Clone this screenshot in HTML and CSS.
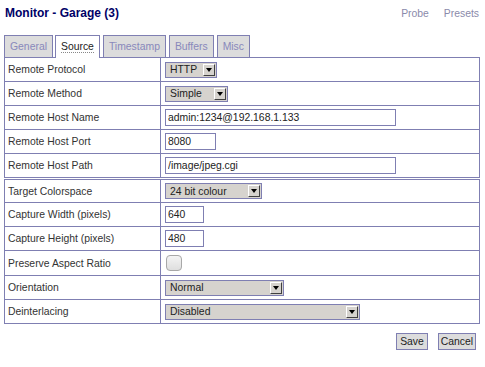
FILE: index.html
```html
<!DOCTYPE html>
<html lang="en">

<head>
    <meta charset="UTF-8" />
    <title>Monitor - Garage (3)</title>
    <link rel="stylesheet" href="styles.css">
</head>

<body>
    <div class="page">
        <div class="header">
            <h2>Monitor - Garage (3)</h2>
            <div class="links">
                <a href="#">Probe</a>
                <a href="#">Presets</a>
            </div>
        </div>

        <ul class="tabs">
            <li><a href="#">General</a></li>
            <li class="active"><a href="#">Source</a></li>
            <li><a href="#">Timestamp</a></li>
            <li><a href="#">Buffers</a></li>
            <li><a href="#">Misc</a></li>
        </ul>

        <table class="settings">
            <tr>
                <td class="label">Remote Protocol</td>
                <td><span class="select" style="width: 52px"><span class="value">HTTP</span><span class="arrow"></span></span></td>
            </tr>
            <tr>
                <td class="label">Remote Method</td>
                <td><span class="select" style="width: 63px"><span class="value">Simple</span><span class="arrow"></span></span></td>
            </tr>
            <tr>
                <td class="label">Remote Host Name</td>
                <td><input type="text" class="text wide" value="admin:1234@192.168.1.133"></td>
            </tr>
            <tr>
                <td class="label">Remote Host Port</td>
                <td><input type="text" class="text port" value="8080"></td>
            </tr>
            <tr>
                <td class="label">Remote Host Path</td>
                <td><input type="text" class="text wide" value="/image/jpeg.cgi"></td>
            </tr>
            <tr class="group">
                <td class="label">Target Colorspace</td>
                <td><span class="select" style="width: 97px"><span class="value">24 bit colour</span><span class="arrow"></span></span></td>
            </tr>
            <tr>
                <td class="label">Capture Width (pixels)</td>
                <td><input type="text" class="text small" value="640"></td>
            </tr>
            <tr>
                <td class="label">Capture Height (pixels)</td>
                <td><input type="text" class="text small" value="480"></td>
            </tr>
            <tr class="check-row">
                <td class="label">Preserve Aspect Ratio</td>
                <td><input type="checkbox" class="check"></td>
            </tr>
            <tr>
                <td class="label">Orientation</td>
                <td><span class="select" style="width: 119px"><span class="value">Normal</span><span class="arrow"></span></span></td>
            </tr>
            <tr>
                <td class="label">Deinterlacing</td>
                <td><span class="select" style="width: 195px"><span class="value">Disabled</span><span class="arrow"></span></span></td>
            </tr>
        </table>

        <div class="actions">
            <button class="save">Save</button>
            <button class="cancel">Cancel</button>
        </div>
    </div>
</body>

</html>
```

FILE: styles.css
```css
* {
    box-sizing: border-box;
    --line: #7f7fb2;
    --tab-bg: #dcdcdc;
    --control-bg: #d6d3ce;
}

body {
    margin: 0;
    font-family: "Liberation Sans", Arial, sans-serif;
    font-size: 10.4px;
    color: #333333;
    background-color: #ffffff;
}

.page {
    width: 485px;
    padding: 3px 6px 0 4px;
}

.header {
    display: flex;
    justify-content: space-between;
    align-items: center;
    height: 20px;
}

h2 {
    margin: 0 0 0 1px;
    font-size: 12px;
    color: #000066;
}

.links a {
    color: #8a8aaa;
    text-decoration: none;
    margin-left: 12px;
}

.tabs {
    list-style: none;
    margin: 12px 0 0 0;
    padding: 0;
    display: flex;
    gap: 2px;
}

.tabs li {
    height: 22px;
    padding: 0 5px;
    display: flex;
    align-items: center;
    background-color: var(--tab-bg);
    border: 1px solid var(--line);
    border-bottom: none;
}

.tabs li + li {
    margin-left: 1px;
}

.tabs li:nth-child(2) {
    margin-left: 0;
}

.tabs a {
    color: #8888bb;
    text-decoration: none;
}

.tabs .active {
    background-color: #ffffff;
    height: 23px;
    margin-bottom: -1px;
    position: relative;
}

.tabs .active a {
    color: #222222;
    border-bottom: 1px dotted #888888;
}

.settings {
    width: 476px;
    border-collapse: collapse;
    border: 1px solid var(--line);
}

.settings td {
    border: 1px solid var(--line);
    padding: 3px 4px;
    height: 24px;
    vertical-align: middle;
}

.settings td.label {
    width: 156px;
    padding-left: 3px;
}

.settings .group td {
    border-top: 3px double var(--line);
    height: 23px;
}

.settings .check-row td {
    height: 25px;
}

.select {
    display: flex;
    align-items: center;
    height: 16px;
    padding: 1px 1px 1px 4px;
    background-color: var(--control-bg);
    border: 1px solid var(--line);
    color: #222222;
}

.select .value {
    flex-grow: 1;
}

.arrow {
    width: 12px;
    height: 12px;
    background-color: var(--control-bg);
    border-top: 1px solid #ffffff;
    border-left: 1px solid #ffffff;
    border-right: 1px solid #404040;
    border-bottom: 1px solid #404040;
    display: flex;
    align-items: center;
    justify-content: center;
}

.arrow::after {
    content: "";
    border-left: 3px solid transparent;
    border-right: 3px solid transparent;
    border-top: 4px solid #000000;
}

.text {
    display: block;
    height: 17px;
    padding: 0 2px;
    border: 1px solid var(--line);
    font-family: inherit;
    font-size: 10.4px;
    color: #222222;
    outline: none;
}

.wide {
    width: 231px;
}

.port {
    width: 51px;
}

.small {
    width: 39px;
}

.check {
    appearance: none;
    display: block;
    margin: 0 0 0 1px;
    width: 16px;
    height: 16px;
    border: 1px solid #a8a8a8;
    border-radius: 4px;
    background: linear-gradient(#f4f4f4, #dedede);
}

.actions {
    display: flex;
    justify-content: flex-end;
    gap: 10px;
    margin-top: 9px;
    padding-right: 3px;
}

button {
    height: 17px;
    padding: 0;
    font-family: inherit;
    font-size: 10.4px;
    color: #222222;
    background-color: var(--tab-bg);
    border: 1px solid var(--line);
}

.save {
    width: 32px;
}

.cancel {
    width: 38px;
}
```
